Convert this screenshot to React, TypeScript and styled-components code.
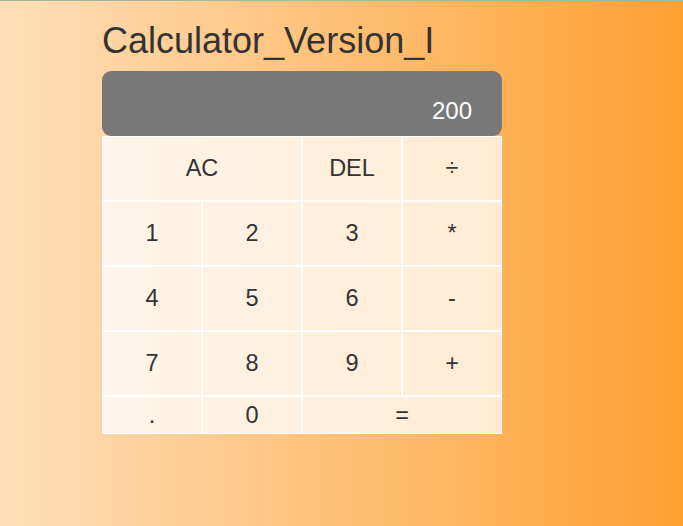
import React from 'react';
import styled, { createGlobalStyle } from 'styled-components';

const GlobalStyle = createGlobalStyle`
  html, body {
    margin: 0;
    min-height: 100%;
  }

  body {
    min-height: 526px;
    box-sizing: border-box;
    border-top: 1px solid #a0b89c;
    background: linear-gradient(to right, #ffdfba, #ffa033);
    font-family: "Liberation Sans", Arial, sans-serif;
    color: #333;
  }
`;

const Page = styled.main`
  padding: 22px 0 0 102px;
`;

const Title = styled.h1`
  margin: 0 0 12px;
  font-size: 36px;
  font-weight: 400;
  line-height: 36px;
  color: #333;
`;

const Calculator = styled.div`
  width: 400px;
`;

const Display = styled.div`
  height: 65px;
  box-sizing: border-box;
  display: flex;
  align-items: flex-end;
  justify-content: flex-end;
  padding: 0 30px 13px;
  border-radius: 9px;
  background: #787878;
  color: #fff;
  font-size: 24px;
  line-height: 24px;
`;

const Keys = styled.div`
  display: grid;
  grid-template-columns: repeat(4, 100px);
  grid-template-rows: repeat(4, 65px) 38px;
`;

const Key = styled.button<{ $span?: number }>`
  grid-column: span ${props => props.$span || 1};
  margin: 0;
  padding: 0;
  border: 1px solid #fff;
  background: rgba(255, 255, 255, 0.75);
  font-family: inherit;
  font-size: 23.5px;
  color: #333;
  cursor: pointer;
`;

const rows: { label: string; span?: number }[] = [
  { label: 'AC', span: 2 },
  { label: 'DEL' },
  { label: '÷' },
  { label: '1' },
  { label: '2' },
  { label: '3' },
  { label: '*' },
  { label: '4' },
  { label: '5' },
  { label: '6' },
  { label: '-' },
  { label: '7' },
  { label: '8' },
  { label: '9' },
  { label: '+' },
  { label: '.' },
  { label: '0' },
  { label: '=', span: 2 },
];

export default function App() {
  return (
    <>
      <GlobalStyle />
      <Page>
        <Title>Calculator_Version_I</Title>
        <Calculator>
          <Display>200</Display>
          <Keys>
            {rows.map(k => (
              <Key key={k.label} $span={k.span}>{k.label}</Key>
            ))}
          </Keys>
        </Calculator>
      </Page>
    </>
  );
}
